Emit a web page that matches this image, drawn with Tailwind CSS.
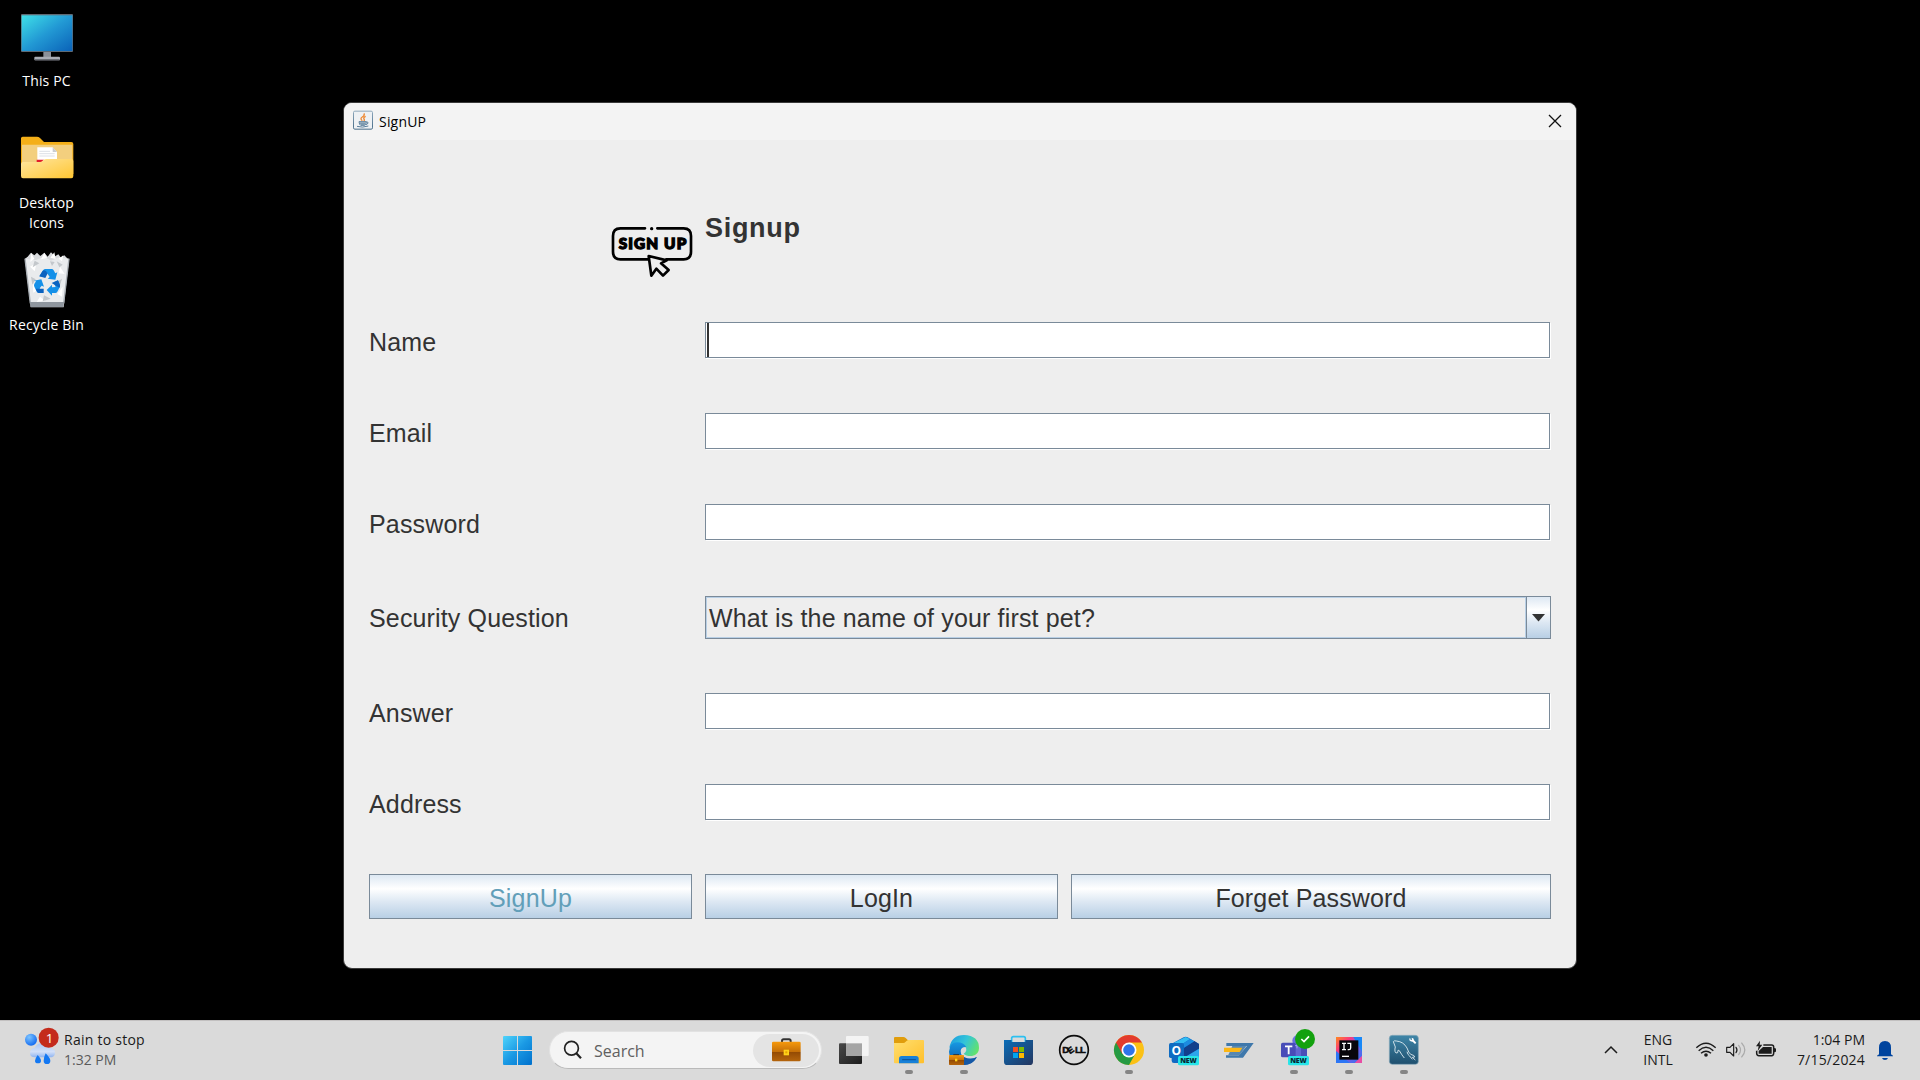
<!DOCTYPE html>
<html lang="en">
<head>
<meta charset="utf-8">
<title>SignUP</title>
<script src="https://cdn.jsdelivr.net/npm/@tailwindcss/browser@4"></script>
</head>
<body class="w-[1920px] h-[1080px] overflow-hidden bg-black flex flex-col font-['Open_Sans',sans-serif] text-sm">

<main class="h-[1020px] flex">
  <!-- Desktop shortcuts -->
  <div class="w-[93px] shrink-0 text-white text-center leading-5 tracking-[0.15px]">
    <div class="h-[122px]">
      <svg class="block" width="93" height="71" viewBox="0 0 279 213">
        <defs><linearGradient id="pc" x1="0" y1="0" x2="1" y2="1"><stop offset="0" stop-color="#3fe0e8"/><stop offset=".5" stop-color="#2299d4"/><stop offset="1" stop-color="#0a62b8"/></linearGradient></defs>
        <path d="M130 154h23v18h-23z" fill="#8b9099"/><rect x="103" y="170" width="77" height="11" rx="3" fill="#a9adb5"/><path d="M104 177h75v4h-75z" fill="#6a6e76"/>
        <rect x="63" y="42" width="156" height="114" rx="3" fill="#5f6a74"/><rect x="65" y="46" width="152" height="107" fill="url(#pc)"/>
      </svg>
      <div>This PC</div>
    </div>
    <div class="h-[122px]">
      <svg class="block" width="93" height="71" viewBox="0 366 279 213">
        <defs><linearGradient id="fo" x1="0" y1="0" x2="1" y2="1"><stop offset="0" stop-color="#ffe6a0"/><stop offset="1" stop-color="#ffc632"/></linearGradient></defs>
        <path d="M63 415q0-5 5-5h43q5 0 9 4l12 12h82q6 0 6 6v90H63z" fill="#f4af18"/>
        <path d="M66 434h151v80H66z" fill="#f3cf7e"/>
        <path d="M112 442h46l13 14v34h-59z" fill="#fff"/><path d="M158 442l13 14h-13z" fill="#c9ccd2"/><path d="M118 454h32M118 461h46M118 468h46" stroke="#dde0e6" stroke-width="3"/><path d="M110 479h22l-8 8h-14z" fill="#e21b2c"/>
        <path d="M63 492q0-6 6-6h51q4 0 8-4 5-5 10-5h76q6 0 6 6v45q0 7-6 7H69q-6 0-6-7z" fill="url(#fo)"/>
      </svg>
      <div>Desktop<br>Icons</div>
    </div>
    <div>
      <svg class="block" width="93" height="71" viewBox="0 732 279 213">
        <path d="M75 776l8-6 10-12 10 8 8-8 10 10 12-10 10 12 10-13 12 12 10-6 8 10 10-7 5 5 9 9-16 142H92z" fill="#d9dbde"/>
        <path d="M75 776l32 4 26-10 20 12 25-10 29 4-16 134H91z" fill="#e9ebed"/>
        <path d="M93 758l10 18-12 10zM133 758l8 16-18 4zM163 757l4 20-16-4zM190 766l-4 18-10-8zM90 800l20-12-6 26zM180 800l14 22-18-2zM98 850l16 20-14 8zM172 882l16-22-2 30zM120 890l16 12-26 4z" fill="#fff"/>
        <path d="M104 782l14 8-20 12zM170 784l18 10-10 8zM93 830l14 8-10 16zM186 836l-6 20-6-12zM132 886l20 10-24 8zM150 784l14 2-8 12z" fill="#c3c7cb"/>
        <path d="M75 776l16 134M207 776l-16 134" stroke="#aab0b6" stroke-width="4"/>
        <path d="M90 906h102l-2 15H92z" fill="#8f969e"/>
        <path d="M118 829l12-19q2-3 6-3h19q4 0 6 4l5 9 6-3-6 22-23-3 6-5-10-15-8 15z" fill="#1490e8"/><path d="M118 829l10-17q8-5 15 8l-7 14z" fill="#0b62bf"/>
        <path d="M102 842l22-4 8 22-7-3-6 8 8 14h-10q-4 0-6-3l-8-16q-2-4 0-8l5-8z" fill="#1490e8"/><path d="M107 866h24v13h-13q-5 0-7-4z" fill="#0b62bf"/>
        <path d="M161 847l13-6 6 14q1 4-1 7l-7 13q-2 4-6 4h-10v8l-16-17 16-16v8l11-1z" fill="#1490e8"/><path d="M155 849l19-8 6 14q1 3-2 8z" fill="#0b62bf"/>
      </svg>
      <div>Recycle Bin</div>
    </div>
  </div>

  <!-- Dialog -->
  <section class="mt-[102px] ml-[250px] w-[1234px] h-[867px] rounded-[9px] border border-[#3a3a3a] bg-[#eeeeee] overflow-hidden flex flex-col">
    <header class="h-[37px] shrink-0 bg-[#f3f3f3] flex items-center pl-[9px] pr-[14px] text-black">
      <svg width="20" height="20" viewBox="0 0 60 60" class="mb-1">
        <defs><linearGradient id="jv" x1="0" y1="0" x2="0" y2="1"><stop offset="0" stop-color="#8fa9bd"/><stop offset="1" stop-color="#466b87"/></linearGradient></defs>
        <rect x="1.500" y="3.500" width="57" height="54" rx="4" fill="#eef1f4" stroke="url(#jv)" stroke-width="3"/>
        <path d="M33 10q3 6-5 11t0 11M38 19q-8 4-5 8t-1 7" fill="none" stroke="#ee8a35" stroke-width="4"/>
        <path d="M18 35h22q-1 10-5 11H23q-4-1-5-11zM40 36q6-1 5 3t-7 5M12 49q16 5 34-1" fill="none" stroke="#5b7f9c" stroke-width="3"/><path d="M19 37h20l-4 8H23z" fill="#7d9ab0"/>
      </svg>
      <span class="ml-1.5 grow tracking-[0.2px]">SignUP</span>
      <svg class="mb-0.5" width="14" height="14" viewBox="0 0 14 14"><path d="M1 1l12 12M13 1L1 13" stroke="#111" stroke-width="1.300"/></svg>
    </header>

    <form class="px-[25px] grid grid-cols-[336px_846px] content-start font-['Liberation_Sans',sans-serif] text-[25px] leading-9 tracking-[0.15px] text-[#333333]">
      <div class="h-[182px] pt-[83px] pr-3 flex justify-end items-start">
        <svg width="82" height="55" viewBox="33 39 246 165">
          <path d="M135 55H61Q39 55 39 78v47q0 23 22 23h84M172 55h79q22 0 22 23v47q0 23-22 23h-52" fill="none" stroke="#000" stroke-width="8" stroke-linecap="round"/>
          <circle cx="155" cy="56" r="5"/>
          <text x="56" y="118" textLength="203" lengthAdjust="spacing" font-family="Lato, sans-serif" font-weight="900" font-size="46" letter-spacing="0" stroke="#000" stroke-width="4">SIGN UP</text>
          <path d="M146 138l54 13-17 9 23 20-17 17-20-21-15 21z" fill="#eee" stroke="#000" stroke-width="8" stroke-linejoin="round"/>
        </svg>
      </div>
      <h1 class="pt-[70px] text-[27px] font-bold tracking-[0.7px]">Signup</h1>

      <label class="h-[91px] pt-0.5">Name</label>
      <div class="w-[845px] h-9 bg-white border border-[#7a8a99] shadow-[1px_1px_0_#fff] pl-px"><div class="w-0.5 h-[34px] bg-[#333]"></div></div>
      <label class="h-[91px] pt-0.5">Email</label>
      <div class="w-[845px] h-9 bg-white border border-[#7a8a99] shadow-[1px_1px_0_#fff]"></div>
      <label class="h-[92px] pt-0.5">Password</label>
      <div class="w-[845px] h-9 bg-white border border-[#7a8a99] shadow-[1px_1px_0_#fff]"></div>
      <label class="h-[97px] pt-1">Security Question</label>
      <div class="h-[43px] border border-[#7a8a99] flex">
        <div class="grow border border-[#b8cfe5] pl-[2px] pt-[2px]">What is the name of your first pet?</div>
        <div class="w-6 border-l border-[#7a8a99] bg-[linear-gradient(#dde8f3,#fff_32%,#dde8f3_62%,#b8cfe5)] flex items-center justify-center">
          <svg width="13" height="8" viewBox="0 0 13 8"><path d="M0 0h13L6.500 7.500z" fill="#333"/></svg>
        </div>
      </div>
      <label class="h-[91px] pt-0.5">Answer</label>
      <div class="w-[845px] h-9 bg-white border border-[#7a8a99] shadow-[1px_1px_0_#fff]"></div>
      <label class="h-[90px] pt-0.5">Address</label>
      <div class="w-[845px] h-9 bg-white border border-[#7a8a99] shadow-[1px_1px_0_#fff]"></div>

      <div class="col-span-2 h-[45px] flex gap-[13px]">
        <button type="button" class="w-[323px] pt-0.5 border border-[#7a8a99] bg-[linear-gradient(#dde8f3,#fff_32%,#dde8f3_62%,#b8cfe5)] text-[#629fb9]">SignUp</button>
        <button type="button" class="w-[353px] pt-0.5 border border-[#7a8a99] bg-[linear-gradient(#dde8f3,#fff_32%,#dde8f3_62%,#b8cfe5)]">LogIn</button>
        <button type="button" class="w-[480px] pt-0.5 border border-[#7a8a99] bg-[linear-gradient(#dde8f3,#fff_32%,#dde8f3_62%,#b8cfe5)]">Forget Password</button>
      </div>
    </form>
  </section>
</main>

<!-- Taskbar -->
<footer class="h-[60px] bg-[#dadada] border-t border-[#c2c0c0] flex leading-5 text-[#1a1a1a]">
  <div class="w-[490px] flex">
    <svg width="64" height="59" viewBox="0 33 192 177">
      <defs><radialGradient id="sun" cx=".35" cy=".3" r=".8"><stop offset="0" stop-color="#7cc4ff"/><stop offset="1" stop-color="#0862f0"/></radialGradient>
      <linearGradient id="cloud" x1="0" y1="0" x2="0" y2="1"><stop offset="0" stop-color="#a9c6f6"/><stop offset=".6" stop-color="#d3e0f8"/><stop offset="1" stop-color="#8fb4f0"/></linearGradient></defs>
      <circle cx="93" cy="89" r="18" fill="url(#sun)"/>
      <path d="M105 142q-15 0-15-13t14-15q7-16 24-14 14 1 19 14 18 0 18 14t-16 14z" fill="url(#cloud)"/>
      <path d="M113 135q10 11 10 17a9 8 0 0 1-18 0q0-6 8-17zM137 130q14 14 14 22a10 10 0 0 1-20 0q0-10 6-22z" fill="#1478f2"/>
      <circle cx="146" cy="83" r="30" fill="#c42b1c"/>
      <text x="149" y="98" text-anchor="middle" font-family="Open Sans, sans-serif" font-size="40" fill="#fff">1</text>
    </svg>
    <div class="pt-[9px] tracking-[0.25px]"><div>Rain to stop</div><div class="text-[#5a5a5a] tracking-normal">1:32 PM</div></div>
  </div>
  <svg width="59" height="59" viewBox="0 18 177 177">
    <defs><linearGradient id="win" gradientUnits="userSpaceOnUse" x1="39" y1="63" x2="126" y2="150"><stop offset="0" stop-color="#4fd4fb"/><stop offset=".5" stop-color="#1a99e4"/><stop offset="1" stop-color="#0070cc"/></linearGradient></defs>
    <path d="M42 63h39v42H39V66q0-3 3-3zM84 63h39q3 0 3 3v39H84zM39 108h42v42H42q-3 0-3-3zM84 108h42v39q0 3-3 3H84z" fill="url(#win)"/>
  </svg>
  <div class="mt-[10px] w-[273px] h-[38px] rounded-full bg-[#f4f4f4] border border-[#e2e2e2] border-b-[#bababa] flex items-center pl-[13px] pr-0.5">
    <svg width="20" height="20" viewBox="0 0 20 20"><circle cx="8.500" cy="8.200" r="6.900" fill="none" stroke="#222" stroke-width="1.700"/><path d="M13.300 13.200l4.700 5" stroke="#222" stroke-width="2.200"/></svg>
    <span class="ml-[11px] pt-px grow text-base text-[#606060]">Search</span>
    <div class="w-[66px] h-[33px] rounded-full bg-[#e4e4e4] flex items-center justify-center">
      <svg width="29" height="24" viewBox="845 71 87 72">
        <defs><linearGradient id="bag" x1="0" y1="0" x2="0" y2="1"><stop offset="0" stop-color="#f79a0c"/><stop offset=".52" stop-color="#c46f08"/><stop offset=".54" stop-color="#944b04"/><stop offset="1" stop-color="#b5650c"/></linearGradient></defs>
        <path d="M875 84v-4q0-5 5-5h16q5 0 5 5v4" fill="none" stroke="#333" stroke-width="6"/><rect x="845" y="82" width="86" height="59" rx="4" fill="url(#bag)"/><rect x="880" y="106" width="16" height="17" fill="#ffd21a"/><rect x="885" y="111" width="6" height="6" fill="#e5a000"/>
      </svg>
    </div>
  </div>

  <div class="ml-1 flex">
    <!-- Task view -->
    <svg width="55" height="59" viewBox="18 18 165 177">
      <defs><linearGradient id="tv" x1="0" y1="0" x2="1" y2="1"><stop offset="0" stop-color="#484848"/><stop offset="1" stop-color="#1c1c1c"/></linearGradient></defs>
      <rect x="57" y="85" width="69" height="62" rx="3" fill="url(#tv)"/><rect x="78" y="63" width="68" height="60" rx="3" fill="#f4f4f4"/><path d="M78 85h48v38H78z" fill="#a5a5a5"/>
    </svg>
    <!-- File Explorer -->
    <svg width="55" height="59" viewBox="183 18 165 177">
      <defs><linearGradient id="fe" x1="0" y1="0" x2="1" y2="1"><stop offset="0" stop-color="#ffdf70"/><stop offset="1" stop-color="#ffbf2a"/></linearGradient></defs>
      <path d="M222 69q0-3 3-3h25q4 0 7 3l7 7h45v14h-87z" fill="#e09d0c"/><path d="M222 84h28q4 0 7-4 4-5 9-5h43q3 0 3 3v64q0 3-3 3h-84q-3 0-3-3z" fill="url(#fe)"/>
      <path d="M237 145v-14q0-8 8-8h43q8 0 8 8v14z" fill="#1780d8"/><path d="M248 134h38" stroke="#0d57a0" stroke-width="4" stroke-linecap="round"/>
      <rect x="255" y="165" width="24" height="12" rx="6" fill="#858585"/>
    </svg>
    <!-- Edge -->
    <svg width="55" height="59" viewBox="348 18 165 177">
      <defs><linearGradient id="e1" x1="0" y1=".2" x2="1" y2=".6"><stop offset="0" stop-color="#1c9de0"/><stop offset=".5" stop-color="#33c5d8"/><stop offset="1" stop-color="#63e26c"/></linearGradient>
      <linearGradient id="e2" x1="0" y1="0" x2="0" y2="1"><stop offset="0" stop-color="#1698e2"/><stop offset="1" stop-color="#0d54a6"/></linearGradient></defs>
      <path d="M388 98q7-38 44-38 45 2 45 39 0 20-21 24-18 1-25-7 13-9 5-21-12-14-48 3z" fill="url(#e1)"/>
      <path d="M387 110q2-28 25-28 19 0 27 14-16-1-17 12 0 20 22 24 14 2 26-5-12 23-39 23-41-3-44-40z" fill="url(#e2)"/>
      <path d="M432 126q18 9 39 0-12 23-39 24z" fill="#1458a6"/>
      <rect x="387" y="120" width="45" height="30" rx="2" fill="url(#bag)"/><rect x="405" y="131" width="7" height="8" fill="#ffd21a"/><path d="M400 119h17" stroke="#333" stroke-width="3"/>
      <rect x="420" y="165" width="24" height="12" rx="6" fill="#858585"/>
    </svg>
    <!-- Store -->
    <svg width="55" height="59" viewBox="513 18 165 177">
      <defs><linearGradient id="st" x1="0" y1="0" x2="1" y2="1"><stop offset="0" stop-color="#0a6db8"/><stop offset="1" stop-color="#24365f"/></linearGradient></defs>
      <path d="M575 82V70q0-5 5-5h31q5 0 5 5v12" fill="none" stroke="#2cc0f0" stroke-width="5"/><path d="M552 75h23v6h41v-6h23v65q0 10-10 10h-67q-10 0-10-10z" fill="url(#st)"/>
      <path d="M579 96h15v15h-15z" fill="#f25022"/><path d="M597 96h15v15h-15z" fill="#7fba00"/><path d="M579 114h15v15h-15z" fill="#00a4ef"/><path d="M597 114h15v15h-15z" fill="#ffb900"/>
    </svg>
    <!-- Dell -->
    <svg width="55" height="59" viewBox="678 18 165 177">
      <circle cx="762" cy="105" r="43" fill="none" stroke="#0c0c0c" stroke-width="5"/>
      <g font-family="Liberation Sans, sans-serif" font-weight="700" font-size="29" fill="#0c0c0c" stroke="#0c0c0c" stroke-width="1.500"><text x="727" y="115">D</text><text transform="translate(750 118) rotate(-35)" font-size="26">E</text><text x="765" y="115">L</text><text x="780" y="115">L</text></g>
    </svg>
    <!-- Chrome -->
    <svg width="55" height="59" viewBox="-57 18 165 177">
      <circle cx="27" cy="105" r="45" fill="#fbc116"/>
      <path d="M27 105L-12 82.500A45 45 0 0 0 27 150l19-34z" fill="#259a43"/>
      <path d="M27 105l-20 12L-12 82.500A45 45 0 0 1 66 82.500H27z" fill="#e33b2e"/>
      <circle cx="27" cy="105" r="22.500" fill="#fff"/><circle cx="27" cy="105" r="17.500" fill="#2f74ea"/>
      <rect x="15" y="165" width="24" height="12" rx="6" fill="#858585"/>
    </svg>
    <!-- Outlook -->
    <svg width="55" height="59" viewBox="108 18 165 177">
      <path d="M155 86l36-19q6-3 12 0l34 20v50q0 7-7 7h-68q-7 0-7-7z" fill="#1069c4"/><path d="M162 83l35-17 13 6-42 28z" fill="#33bdf2"/><path d="M178 107l45-29 14 9v14l-45 27z" fill="#123f8c"/><path d="M210 72l13 7-45 28-10-7z" fill="#1c8be0"/><path d="M192 128l45-27v36q0 7-7 7h-38z" fill="#2da5ec"/>
      <rect x="147" y="84" width="45" height="45" rx="5" fill="#0f6cc2"/><text x="169" y="119" text-anchor="middle" font-family="Open Sans, sans-serif" font-weight="700" font-size="36" fill="#fff">O</text>
      <rect x="174" y="123" width="63" height="28" rx="5" fill="#27e5e8"/><text x="205.500" y="144" text-anchor="middle" textLength="50" font-family="Open Sans, sans-serif" font-weight="800" font-size="21" fill="#082a33">NEW</text>
    </svg>
    <!-- Angled stripe launcher -->
    <svg width="55" height="59" viewBox="273 18 165 177">
      <path d="M319 84h82l-32 44h-51v-7h39l24-28h-62z" fill="#3f78ab"/><path d="M337 93h42l-20 27h-34z" fill="#5687b2"/><path d="M312 98h55l-8 13h-47z" fill="#fbb615"/>
    </svg>
    <!-- Teams -->
    <svg width="55" height="59" viewBox="438 18 165 177">
      <circle cx="534" cy="77" r="17" fill="#6a70e0"/><path d="M514 89h47v36q-4 20-24 20-22-2-23-22z" fill="#6267cf"/><path d="M543 89h18v34h-18z" fill="#4a4fb8"/>
      <rect x="483" y="83" width="44" height="44" rx="5" fill="#484cb8"/><path d="M495 94h22M506 94v24" stroke="#fff" stroke-width="5.500"/><path d="M525 92h6v8" fill="none" stroke="#c4c8fa" stroke-width="2"/>
      <rect x="504" y="123" width="63" height="28" rx="5" fill="#27e5e8"/><text x="535.500" y="144" text-anchor="middle" textLength="50" font-family="Open Sans, sans-serif" font-weight="800" font-size="21" fill="#082a33">NEW</text>
      <circle cx="555" cy="72" r="30" fill="#13a10e"/><path d="M544 72l8 8 15-16" fill="none" stroke="#fff" stroke-width="5"/>
      <rect x="510" y="165" width="24" height="12" rx="6" fill="#858585"/>
    </svg>
    <!-- IntelliJ IDEA -->
    <svg width="55" height="59" viewBox="603 18 165 177">
      <defs><linearGradient id="ij" x1="0" y1="0" x2="1" y2="1"><stop offset="0" stop-color="#ff8a1e"/><stop offset=".28" stop-color="#fb3a7a"/><stop offset=".5" stop-color="#9c4fe0"/><stop offset="1" stop-color="#1d7cf5"/></linearGradient></defs>
      <path d="M648 66h78v78h-78z" fill="url(#ij)"/><path d="M700 66h26v45z" fill="#1888f8"/><path d="M648 108v36h42z" fill="#2d76f5"/><path d="M704 144l22-22v22z" fill="#e84da4"/><path d="M658 76h57v58h-57z" fill="#08060c"/>
      <path d="M666 85h12M672 85v19M666 104h12M682 85h10v14q0 5-5 5h-4" fill="none" stroke="#fff" stroke-width="4"/><path d="M666 124h21" stroke="#fff" stroke-width="4"/>
      <rect x="675" y="165" width="24" height="12" rx="6" fill="#858585"/>
    </svg>
    <!-- MySQL Workbench -->
    <svg width="55" height="59" viewBox="768 18 165 177">
      <defs><linearGradient id="my" x1="0" y1="0" x2="0" y2="1"><stop offset="0" stop-color="#3f86a8"/><stop offset="1" stop-color="#1f4f6e"/></linearGradient></defs>
      <rect x="808" y="61" width="87" height="87" rx="9" fill="url(#my)" stroke="#86a9ba" stroke-width="2"/>
      <path d="M833 113q-6 4-8-4-1-7 1-13l-6-16q2-4 9-2 22 2 32 21 5 15 11 19 13 3 12 8l-7 1 9 8M833 113q0-12 5-6 8 14 15 22M861 110q2 10 8 13l8 10" fill="none" stroke="#d9e7ee" stroke-width="2.800"/>
      <path d="M870 68q-5 7 2 11 4 2 6 1l7 7 4-4-7-7q0-7-7-8l1 7-4-1z" fill="#fff"/>
      <rect x="840" y="165" width="24" height="12" rx="6" fill="#858585"/>
    </svg>
  </div>

  <!-- System tray -->
  <div class="ml-auto flex">
    <svg width="44" height="59" viewBox="15 18 132 177"><path d="M45 114l18-18 18 18" fill="none" stroke="#1c1c1c" stroke-width="4.500"/></svg>
    <div class="w-[46px] pt-[9px] text-center mr-3 -ml-1">ENG<br>INTL</div>
    <svg width="86" height="59" viewBox="309 18 258 177">
      <g fill="none" stroke="#1c1c1c" stroke-width="4.200"><path d="M319 98q29-27 58 0M326 107q22-20 44 0M333 115q15-13 30 0"/></g><circle cx="348" cy="120" r="5.500" fill="#1c1c1c"/>
      <g fill="none" stroke-width="3.500" stroke-linecap="round"><path d="M410 97h10l11-11v37l-11-11h-10z" stroke="#1c1c1c" stroke-linejoin="round"/><path d="M438 97q6 8 0 16" stroke="#1c1c1c"/><path d="M446 91q11 14 0 28M455 84q19 21 0 42" stroke="#aaa"/></g>
      <path d="M520 90h25q6 0 6 6v19q0 7-6 7h-38q-7 0-7-7v-8" fill="none" stroke="#1c1c1c" stroke-width="4.500"/><path d="M552 99q6 0 6 3v7q0 3-6 3z" fill="#1c1c1c"/><path d="M519 96h26v20h-39v-8z" fill="#1c1c1c"/><path d="M510 77l-12 17h8l-3 14 14-19h-8z" fill="#1c1c1c"/>
    </svg>
    <div class="w-[91px] pr-[3px] pt-[9px] text-right -ml-0.5">1:04 PM<br><span class="tracking-[0.2px]">7/15/2024</span></div>
    <svg width="52" height="59" viewBox="834 18 156 177"><path d="M867 118V98q0-20 18-20t18 20v20l6 4v2h-48v-2zM876 129h18q-2 6-9 6t-9-6z" fill="#00449e"/></svg>
  </div>
</footer>
</body>
</html>
